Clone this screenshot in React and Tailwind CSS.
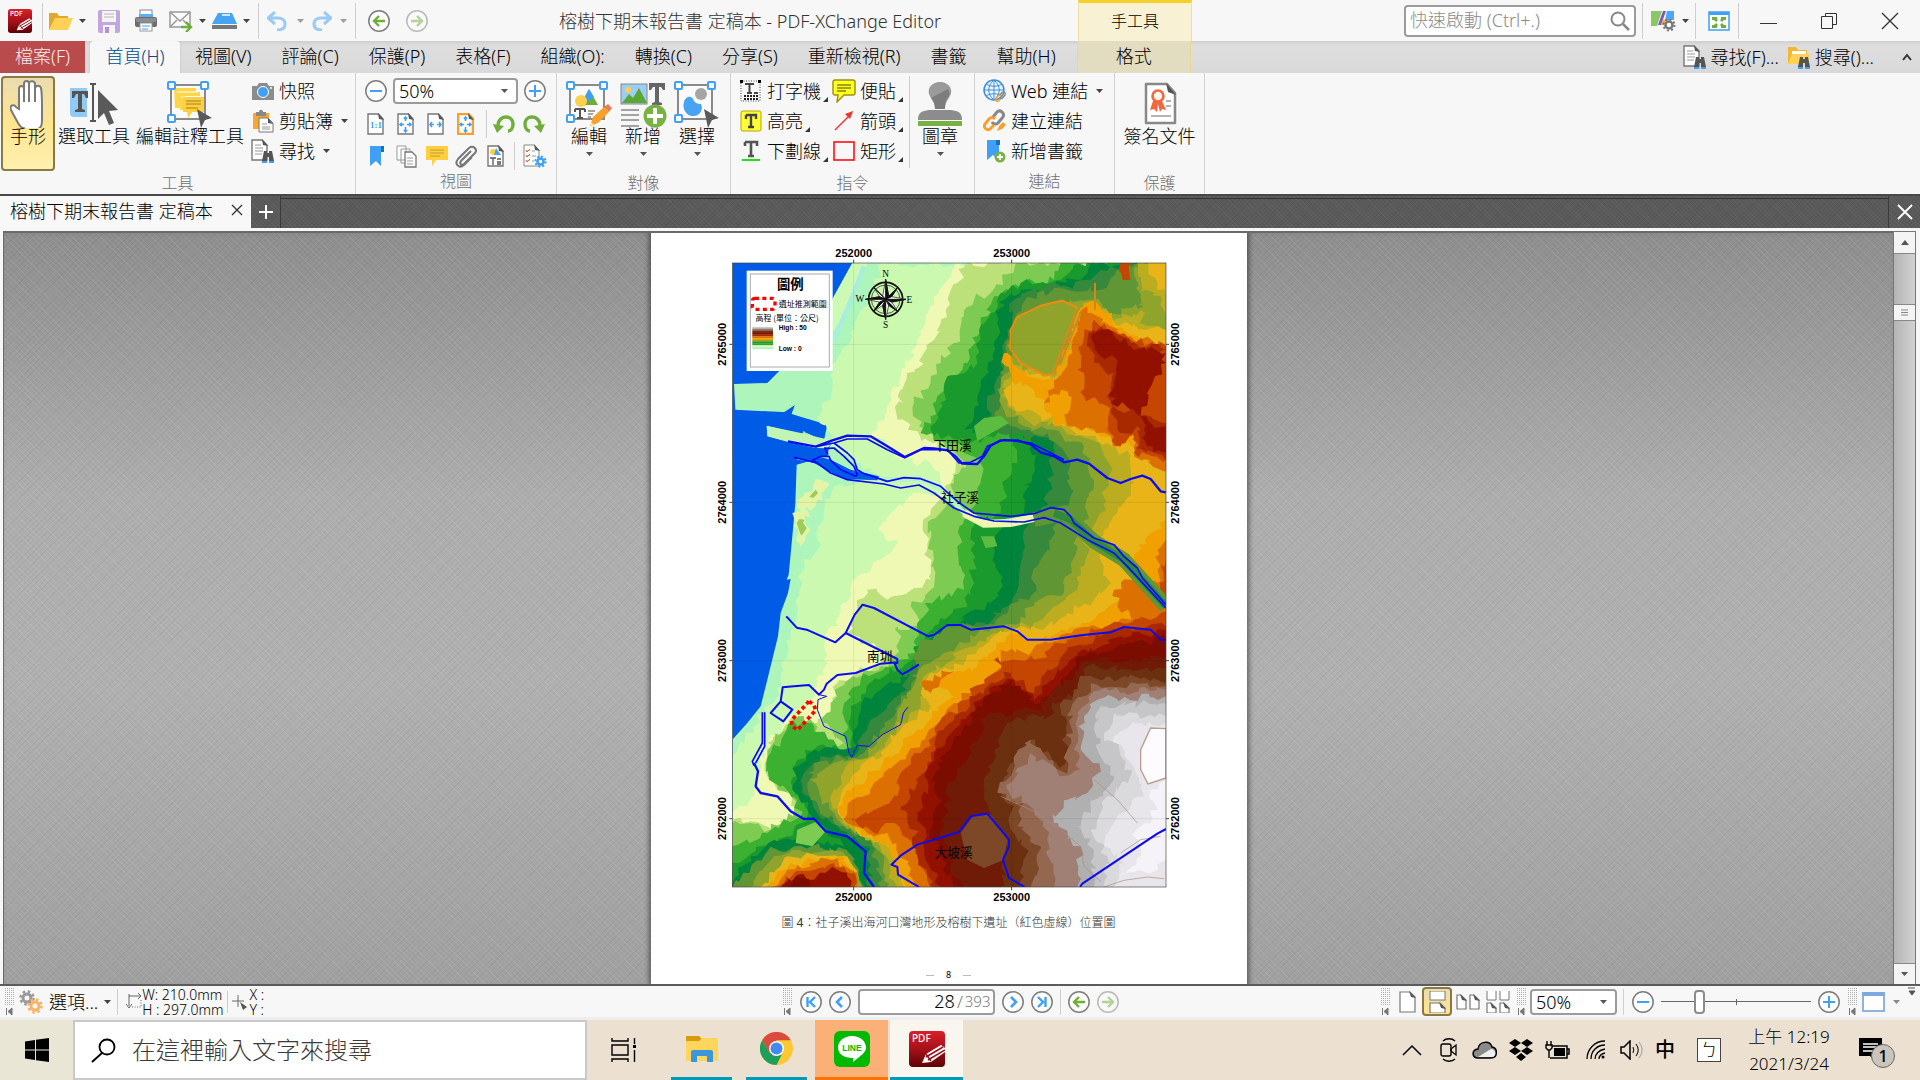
import React from "react";

const SANS = "font-['Noto_Sans','Noto_Sans_CJK_TC',sans-serif]";

/* ---------- shared pieces ---------- */

function Svg({ w, h, box, children, className = "" }) {
  return (
    <svg width={w} height={h} viewBox={box || `0 0 ${w} ${h}`} fill="none" className={`shrink-0 ${className}`} aria-hidden="true">
      {children}
    </svg>
  );
}

function Caret({ className = "text-[#444]" }) {
  return (
    <Svg w={7} h={4} className={className}>
      <path d="M0 0h7L3.5 4z" fill="currentColor" />
    </Svg>
  );
}

function Corner() {
  return (
    <Svg w={5} h={5} className="mb-1 -ml-0.5 self-end">
      <path d="M5 0v5H0z" fill="#333" />
    </Svg>
  );
}

function Rule({ className = "" }) {
  return <span className={`w-px shrink-0 bg-[#cfcfcf] ${className}`} />;
}

function Grip() {
  return (
    <Svg w={11} h={28}>
      {[0, 1, 2, 3, 4].map((c) =>
        [0, 1, 2, 3, 4, 5, 6, 7, 8].map((r) => <rect key={`${c}-${r}`} x={c * 2 + 1} y={r * 2} width="1" height="1" fill="#b0b0b0" />)
      )}
      <path d="M2.500 20v7M8 20v7L4 23.500z" stroke="#777" fill="#777" strokeWidth="1" />
    </Svg>
  );
}

function Circle({ label, children, faded }) {
  return (
    <button aria-label={label} className={faded ? "opacity-50" : ""}>
      <Svg w={22} h={22}>
        <circle cx="11" cy="11" r="10.200" fill="#fcfcfc" stroke="#7d7d7d" strokeWidth="1.500" />
        {children}
      </Svg>
    </button>
  );
}

const Minus = () => <path d="M5 11h12" stroke="#3fa0f5" strokeWidth="2" />;
const Plus = () => <path d="M5 11h12M11 5v12" stroke="#3fa0f5" strokeWidth="2" />;
const ArrowL = () => <path d="M17 11H6M11 6l-5 5 5 5" stroke="#6fae3a" strokeWidth="2.400" />;
const ArrowR = () => <path d="M5 11h11M11 6l5 5-5 5" stroke="#6fae3a" strokeWidth="2.400" />;

function ZoomSelect({ id, className }) {
  return (
    <span className={`relative flex items-center rounded-sm border-2 border-[#9b9b9b] bg-white ${className}`}>
      <select id={id} aria-label="縮放比例" defaultValue="50%" className="h-full w-full appearance-none bg-transparent pl-1 text-[18px] leading-5 text-black outline-none">
        <option>50%</option>
      </select>
      <span className="pointer-events-none absolute right-2">
        <Caret className="text-[#555]" />
      </span>
    </span>
  );
}

/* ---------- icons ---------- */

function PdfLogo({ size }) {
  return (
    <Svg w={size} h={size} box="0 0 36 36">
      <defs>
        <linearGradient id="pdfred" x1="0" y1="0" x2="0" y2="1">
          <stop offset="0" stopColor="#d8202c" />
          <stop offset="0.550" stopColor="#a01018" />
          <stop offset="1" stopColor="#5c0206" />
        </linearGradient>
      </defs>
      <rect width="36" height="36" rx="4" fill="url(#pdfred)" />
      <text x="3" y="11" fontSize="10" fontFamily="Noto Sans" fontWeight="500" fill="#fff">PDF</text>
      <path d="M13 32l4-9 15-9 4 3v4L22 31z" fill="#fff" />
      <path d="M17 26l17-10M19 29l17-10M17 23l5 7" stroke="#93111a" strokeWidth="1.500" />
    </Svg>
  );
}

function Page({ w = 17, h = 22, children, stroke = "#777", sw = 1.4, fill = "#fff" }) {
  return (
    <Svg w={w} h={h} box="0 0 17 22">
      <path d="M1 1h10.500L16 6v15H1z" fill={fill} stroke={stroke} strokeWidth={sw} />
      <path d="M11 0l6 7-5-1z" fill="#555" />
      {children}
    </Svg>
  );
}

const Binoculars = ({ x, y }) => (
  <g transform={`translate(${x} ${y})`}>
    <path d="M2 0h3v2h2V0h3l2 10H7V6H5v4H0z" fill="#555" />
    <path d="M0 10h5v2H0zM7 10h5v2H7z" fill="#3fa0f5" />
  </g>
);

const FindDoc = () => (
  <Svg w={24} h={24}>
    <path d="M1 1h10l5 5v15H1z" fill="#fff" stroke="#777" strokeWidth="1.400" />
    <path d="M11 0l6 7-5-1z" fill="#555" />
    <path d="M4 6h6M4 9h8M4 12h8M4 15h7" stroke="#999" />
    <Binoculars x={11} y={12} />
  </Svg>
);

const Chain = ({ x = 0, y = 0, s = 1 }) => (
  <g transform={`translate(${x} ${y}) scale(${s})`} strokeWidth="3" fill="none">
    <path d="M10 8l4-5c3-3 8 1 6 5l-5 6c-2 2-5 1-6-1" stroke="#888" />
    <path d="M12 10c-2-2-4-2-6 0l-4 5c-2 4 2 7 5 5l4-4" stroke="#f9a02c" />
  </g>
);

function Frame({ children, arrow }) {
  return (
    <Svg w={48} h={48}>
      <rect x="5" y="5" width="34" height="34" stroke="#8a8a8a" strokeWidth="2" fill="#fafafa" />
      {children}
      {[[2, 2], [35, 2], [2, 35]].map(([x, y]) => (
        <rect key={`${x}${y}`} x={x} y={y} width="7" height="7" rx="1" fill="#fff" stroke="#3fa0f5" strokeWidth="2" />
      ))}
      {arrow && <path d="M31 29l15 9-7 2-4 8z" fill="#5a5a5a" />}
    </Svg>
  );
}

const HandIcon = () => (
  <Svg w={36} h={48}>
    <path
      d="M9 29V9c0-4 5-4 5 0V4c0-4 5-4 5 0v-1c1-3 6-2 6 1v4c1-3 5-3 6 0 1 5 1 11 1 19v14c0 7-3 9-10 9-8 0-11-2-14-7L1 30c-2-5 3-6 5-3z"
      fill="#fff" stroke="#7a7a7a" strokeWidth="2"
    />
    <path d="M14 9v13M19 4v18M25 6v16" stroke="#7a7a7a" strokeWidth="2" />
  </Svg>
);

const SelectIcon = () => (
  <Svg w={48} h={48}>
    <path d="M0 8h17v29H4a4 4 0 0 1-4-4z" fill="#90caf9" />
    <path d="M2 11h16v7h-2l-2-4h-2v15l3 1v2H5v-2l3-1V14H6l-2 4H2z" fill="#555" />
    <path d="M20 4h6M23 4v37M20 41h6" stroke="#555" strokeWidth="2" />
    <path d="M28 10l20 20-9 1 5 12-5 2-5-12-6 6z" fill="#5a5a5a" />
  </Svg>
);

/* ---------- title bar ---------- */

function TitleBar() {
  return (
    <header className="flex h-[41px] shrink-0 items-center bg-[#f7f7f7] pl-2">
      <div className="flex w-[551px] shrink-0 items-center">
        <PdfLogo size={24} />
        <Rule className="ml-2.5 h-9" />
        <button aria-label="開啟" className="ml-1.5 flex items-center gap-1.5">
          <Svg w={24} h={20}>
            <path d="M0 19V2h8l2 3h9v4H6z" fill="#e0a92c" />
            <path d="M6 7h18l-5 12H0z" fill="#ffd257" />
          </Svg>
          <Caret />
        </button>
        <button aria-label="儲存" className="ml-3">
          <Svg w={22} h={24}>
            <rect width="22" height="23" y="1" rx="2" fill="#c3a5e0" />
            <rect x="4" y="2" width="14" height="11" fill="#f4f4f4" />
            <path d="M6 5h10M6 8h10" stroke="#ccc" strokeWidth="1.500" />
            <rect x="5" y="16" width="12" height="8" fill="#f4f4f4" />
            <rect x="7" y="18" width="4" height="6" fill="#b391d6" />
          </Svg>
        </button>
        <button aria-label="列印" className="ml-[15px]">
          <Svg w={22} h={23}>
            <rect x="5" y="1" width="12" height="9" fill="#fff" stroke="#888" />
            <rect x="4" y="5" width="14" height="5" fill="#5cb0f7" />
            <rect y="8" width="22" height="10" rx="2" fill="#6c6c6c" />
            <path d="M1 9h20v4H1z" fill="#8c8c8c" />
            <rect x="5" y="14" width="12" height="8" fill="#fff" stroke="#999" />
            <path d="M7 17h8M7 20h6" stroke="#3fa0f5" />
          </Svg>
        </button>
        <button aria-label="電子郵件" className="ml-3 flex items-center gap-1.5">
          <Svg w={24} h={22}>
            <rect x="1" y="2" width="20" height="15" fill="#fafafa" stroke="#999" strokeWidth="1.500" />
            <path d="M1 2l10 9L21 2M1 17l7-7M21 17l-7-7" stroke="#999" strokeWidth="1.500" />
            <path d="M12 17h9M17 12l5 5-5 5" stroke="#6fae3a" strokeWidth="2.400" />
          </Svg>
          <Caret />
        </button>
        <button aria-label="掃描" className="ml-1.5 flex items-center gap-1.5">
          <Svg w={25} h={18}>
            <path d="M6 1h14l5 11H0z" fill="#46a4f3" />
            <path d="M10 3h8" stroke="#fff" strokeWidth="1.500" />
            <rect y="13" width="25" height="4" fill="#777" />
          </Svg>
          <Caret />
        </button>
        <Rule className="ml-2 h-9" />
        <button aria-label="復原" className="ml-2 flex items-center gap-2.5 opacity-50">
          <Svg w={20} h={20}>
            <path d="M8 1L1 7l7 6M2 7h9c4 0 7 2 7 6s-3 6-8 6" stroke="#3fa0f5" strokeWidth="3" />
          </Svg>
          <Caret />
        </button>
        <button aria-label="重做" className="ml-2 flex items-center gap-2 opacity-50">
          <Svg w={20} h={20}>
            <path d="M12 1l7 6-7 6M18 7H9c-4 0-7 2-7 6s3 6 8 6" stroke="#3fa0f5" strokeWidth="3" />
          </Svg>
          <Caret />
        </button>
        <Rule className="ml-2 mr-3 h-9" />
        <Circle label="上一個視圖"><ArrowL /></Circle>
        <span className="w-4" />
        <Circle label="下一個視圖" faded><ArrowR /></Circle>
      </div>
      <h1 className="shrink-0 text-[18px] leading-6 text-[#333]">榕樹下期末報告書 定稿本 - PDF-XChange Editor</h1>
      <div className="flex flex-1 items-center justify-end">
        <div className="mr-[212px] h-[41px] w-[114px] border-x border-t-[3px] border-x-[#f3df9a] border-t-[#f5cf2a] bg-[#f8f1d4] pt-1.5 text-center text-base text-black">手工具</div>
        <label className="flex h-8 w-[232px] items-center rounded border-2 border-[#9b9b9b] bg-white px-1">
          <input aria-label="快速啟動" placeholder="快速啟動 (Ctrl+.)" className="min-w-0 flex-1 bg-transparent text-[18px] placeholder-[#8b8b8b] outline-none" />
          <Svg w={20} h={20}>
            <circle cx="8" cy="8" r="6.500" stroke="#888" strokeWidth="2" />
            <path d="M13 13l6 6" stroke="#888" strokeWidth="2.500" />
          </Svg>
        </label>
        <Rule className="ml-1.5 h-9" />
        <button aria-label="介面選項" className="ml-2 flex items-center gap-1.5">
          <Svg w={25} h={23}>
            <path d="M0 2h11L6 17H0z" fill="#8cc665" />
            <path d="M12 2h3l-5 14H7z" fill="#7d57b8" />
            <path d="M16 2h7v9h-9z" fill="#4ba9f5" />
            <path d="M12 11h4l-3 5h-3z" fill="#f7a93e" />
            <circle cx="18" cy="16" r="3.500" fill="#fff" stroke="#777" strokeWidth="2.500" />
            <circle cx="18" cy="16" r="5.500" stroke="#777" strokeWidth="2" strokeDasharray="2 2.300" />
          </Svg>
          <Caret />
        </button>
        <Rule className="ml-1.5 h-9" />
        <button aria-label="全螢幕" className="ml-3">
          <Svg w={22} h={20}>
            <rect x="1" y="1" width="20" height="18" fill="#fff" stroke="#3fa0f5" strokeWidth="1.500" />
            <path d="M1 1h20v3H1z" fill="#3fa0f5" />
            <path d="M4 6h5v2l1 1-2 2-2-2H4zM18 6h-5v2l-1 1 2 2 2-2h2zM4 17h5v-2l1-1-2-2-2 2H4zM18 17h-5v-2l-1-1 2-2 2 2h2z" fill="#6fae3a" />
          </Svg>
        </button>
        <Rule className="ml-2 h-9" />
        <button aria-label="最小化" className="ml-[21px]"><Svg w={17} h={18}><path d="M0 11.500h17" stroke="#333" /></Svg></button>
        <button aria-label="還原" className="ml-[43px]">
          <Svg w={18} h={18}><path d="M1.500 4.500h11v12h-11zM5.500 4V1.500h11v11H13" stroke="#333" /></Svg>
        </button>
        <button aria-label="關閉" className="ml-[43px] mr-[21px]"><Svg w={18} h={18}><path d="M1 1l16 16M17 1L1 17" stroke="#333" strokeWidth="1.300" /></Svg></button>
      </div>
    </header>
  );
}

/* ---------- ribbon tabs ---------- */

const MENU = ["視圖(V)", "評論(C)", "保護(P)", "表格(F)", "組織(O):", "轉換(C)", "分享(S)", "重新檢視(R)", "書籤", "幫助(H)"];

function RibbonTabs() {
  return (
    <nav className="flex h-8 shrink-0 items-stretch bg-gradient-to-b from-[#cfcfcf] via-[#dedede] via-15% to-[#d9d9d9] text-[18px] leading-[30px] text-black">
      <button className="w-[85px] bg-[#b94b4d] pb-0.5 text-[#fbe9e9]">檔案(F)</button>
      <button className="ml-[5px] w-[90px] rounded-t-sm bg-[#f7f7f7] pb-0.5 text-[#004a8c] shadow">首頁(H)</button>
      {MENU.map((m) => (
        <button key={m} className="px-[15px] pb-0.5">{m}</button>
      ))}
      <button className="ml-1.5 w-[114px] border-x border-[#ecd88c] bg-[#e2dcc0] pb-0.5">格式</button>
      <span className="flex-1" />
      <button className="flex items-center gap-1"><FindDoc />尋找(F)...</button>
      <button className="ml-2 flex items-center gap-1">
        <Svg w={24} h={24}>
          <path d="M1 2h8l2 3h9v14H1z" fill="#f0b92c" />
          <path d="M5 6h14v6H5z" fill="#fff" />
          <path d="M5 9h18l-3 10H1z" fill="#ffd257" />
          <Binoculars x={11} y={12} />
        </Svg>
        搜尋()...
      </button>
      <button aria-label="收合功能區" className="ml-7 mr-2 self-center"><Svg w={10} h={8}><path d="M1 7l4-5 4 5" stroke="#333" strokeWidth="2" /></Svg></button>
    </nav>
  );
}

/* ---------- ribbon ---------- */

function Group({ title, width, children }) {
  return (
    <section aria-label={title} className={`flex shrink-0 flex-col border-r border-[#d2d2d2] ${width}`}>
      <div className="flex flex-1 items-start pt-[3px]">{children}</div>
      <div className="h-[25px] text-center text-base leading-6 text-[#6f6f6f]">{title}</div>
    </section>
  );
}

function Big({ icon, label, caret, active, className = "" }) {
  return (
    <button className={`flex h-[95px] shrink-0 flex-col items-center rounded-sm pt-0.5 text-[18px] leading-6 text-black ${active ? "border-2 border-[#8a7940] bg-gradient-to-b from-[#eadcae] via-[#ffe58e] to-[#fff0b0]" : "border-2 border-transparent"} ${className}`}>
      {icon}
      <span className="-mt-1 whitespace-nowrap">{label}</span>
      {caret && <span className="mt-1"><Caret className="text-[#555]" /></span>}
    </button>
  );
}

function Small({ icon, label, caret, corner }) {
  return (
    <button className="flex h-[30px] items-center gap-1 whitespace-nowrap text-[18px] text-black">
      <span className="flex w-6 justify-center">{icon}</span>
      {label}
      {caret && <span className="ml-1"><Caret /></span>}
      {corner && <Corner />}
    </button>
  );
}

const Arrows = ({ d }) => <path d={d} stroke="#3fa0f5" strokeWidth="1.600" />;
const FOUR = "M8.500 4v4M8.500 14v5M3 11.500h4M10 11.500h4M7 6l1.500-2L10 6M7 17l1.500 2 1.500-2M5 10l-2 1.500L5 13M12 10l2 1.500-2 1.500";

function IconButton({ label, children, className = "" }) {
  return <button aria-label={label} className={`flex justify-center ${className}`}>{children}</button>;
}

function Ribbon() {
  return (
    <div className="flex h-[121px] shrink-0 bg-[#f7f7f7]">
      <Group title="工具" width="w-[356px]">
        <Big active icon={<HandIcon />} label="手形" className="ml-px w-[54px]" />
        <Big icon={<SelectIcon />} label="選取工具" className="w-[78px]" />
        <Big
          icon={
            <Frame arrow>
              <path d="M8 8h22v4H14v16H9zM12 12h22v4H19v14h-5z" fill="#ffd54a" />
              <path d="M11 12h21M15 17h21" stroke="#fff" strokeWidth="1" />
              <path d="M17 17h21v15H26l-4 6-1-6h-4z" fill="#ffcf40" />
              <path d="M20 21h15M20 24h15M20 28h12" stroke="#c39a2a" strokeWidth="1.500" />
            </Frame>
          }
          label="編輯註釋工具"
          className="w-[114px]"
        />
        <div className="ml-1">
          <Small
            label="快照"
            icon={
              <Svg w={22} h={17}>
                <path d="M0 3h5l2-3h8l2 3h5v14H0z" fill="#8c8c8c" />
                <circle cx="11" cy="9" r="5.500" fill="#3fa0f5" stroke="#fff" />
                <circle cx="19" cy="5" r="1" fill="#fff" />
              </Svg>
            }
          />
          <Small
            label="剪貼簿"
            caret
            icon={
              <Svg w={22} h={24}>
                <path d="M1 4h16v16H1z" fill="#faa634" />
                <path d="M4 3h3c0-3 4-3 4 0h3v4H4z" fill="#888" />
                <path d="M7 9h9l5 5v9H7z" fill="#fff" stroke="#777" />
                <path d="M16 9l5 6-5-1z" fill="#555" />
                <path d="M10 15h5M10 18h8M10 20h8" stroke="#999" />
              </Svg>
            }
          />
          <Small label="尋找" caret icon={<FindDoc />} />
        </div>
      </Group>

      <Group title="視圖" width="w-[201px]">
        <div className="flex w-full flex-col gap-2 pl-[9px] pt-0.5">
          <div className="flex h-[26px] items-center gap-1.5">
            <Circle label="縮小"><Minus /></Circle>
            <ZoomSelect id="zoom-top" className="h-[26px] w-[125px]" />
            <Circle label="放大"><Plus /></Circle>
          </div>
          <div className="flex h-6 items-center">
            <IconButton label="實際大小" className="ml-0.5 w-[17px]"><Page><text x="3" y="15" fontSize="9" fontFamily="Liberation Serif" fontWeight="700" fill="#3fa0f5">1:1</text></Page></IconButton>
            <IconButton label="符合頁面" className="ml-[13px] w-[17px]"><Page><Arrows d={FOUR} /></Page></IconButton>
            <IconButton label="符合寬度" className="ml-[13px] w-[17px]"><Page><Arrows d="M3 11.500h4M10 11.500h4M5 9l-2 2.500L5 14M12 9l2 2.500-2 2.500" /></Page></IconButton>
            <IconButton label="符合可見" className="ml-[13px] w-[17px]"><Page stroke="#f9a02c" sw={2.6}><Arrows d={FOUR} /></Page></IconButton>
            <Rule className="ml-3 h-7" />
            <IconButton label="逆時針旋轉" className="ml-1.5"><Svg w={22} h={20}><path d="M5 12C5 5 10 3 13 3c5 0 7 4 7 7 0 4-2 7-5 7" stroke="#6fae3a" strokeWidth="3.400" /><path d="M0 10l11 2-7 7z" fill="#6fae3a" /></Svg></IconButton>
            <IconButton label="順時針旋轉" className="ml-2"><Svg w={22} h={20}><path d="M17 12c0-7-5-9-8-9-5 0-7 4-7 7 0 4 2 7 5 7" stroke="#6fae3a" strokeWidth="3.400" /><path d="M22 10l-11 2 7 7z" fill="#6fae3a" /></Svg></IconButton>
          </div>
          <div className="flex h-6 items-center">
            <IconButton label="書籤" className="ml-0.5 w-[17px]"><Svg w={16} h={22}><path d="M2 1h11v20l-5-5-6 5z" fill="#3fa0f5" /><path d="M13 1h3v6h-3z" fill="#1d6fb8" /></Svg></IconButton>
            <IconButton label="縮圖" className="ml-3"><Svg w={22} h={23}><path d="M1 1h9v14H1zM5 4h9v14H5z" fill="#fff" stroke="#999" /><path d="M9 7h7l4 4v11H9z" fill="#fff" stroke="#777" strokeWidth="1.300" /><path d="M11 13h6M11 16h6M11 19h6" stroke="#999" /></Svg></IconButton>
            <IconButton label="註釋" className="ml-2"><Svg w={22} h={22}><path d="M0 1h22v14H10l-4 6v-6H0z" fill="#ffcf40" /><path d="M4 5h14M4 8h14M4 11h10" stroke="#c39a2a" /></Svg></IconButton>
            <IconButton label="附件" className="ml-[7px]"><Svg w={22} h={23}><path d="M16 6L6 16c-2 3 1 5 3 3L20 8c3-4-2-8-6-5L3 14c-4 5 1 10 6 6l8-8" stroke="#777" strokeWidth="2" /></Svg></IconButton>
            <IconButton label="內容" className="ml-2.5 w-[17px]"><Page><circle cx="6" cy="7" r="3" fill="#ffcf40" /><path d="M9 3l5 7H7z" fill="#46a4f3" /><path d="M3 13h6M6 13v7M10 14h4M10 17h4M10 19h4" stroke="#555" strokeWidth="1.300" /></Page></IconButton>
            <Rule className="ml-2.5 h-7" />
            <IconButton label="頁面設定" className="ml-2"><Svg w={24} h={24}><path d="M1 1h10l5 5v16H1z" fill="#fff" stroke="#888" /><path d="M11 0l6 7-5-1z" fill="#555" /><path d="M3 6l1 2 3-3M3 11l1 2 3-3M3 16l1 2 3-3" stroke="#e8502c" /><path d="M9 7h3M9 12h4M9 17h2" stroke="#999" /><circle cx="17.500" cy="17.500" r="3" stroke="#3fa0f5" strokeWidth="2.500" fill="#fff" /><circle cx="17.500" cy="17.500" r="5" stroke="#3fa0f5" strokeWidth="2.200" strokeDasharray="2 1.900" /></Svg></IconButton>
          </div>
        </div>
      </Group>

      <Group title="對像" width="w-[174px]">
        <Big
          caret label="編輯" className="ml-[5px] w-[54px]"
          icon={
            <Frame>
              <path d="M24 9l9 16H15z" fill="#6fae3a" /><path d="M24 9l5 8-8 6-2-4z" fill="#3fa0f5" />
              <circle cx="16" cy="21" r="6" fill="#ffd04a" />
              <path d="M10 29h10M15 29v9M12 38h6M10 29v3M20 29v3" stroke="#555" strokeWidth="2" />
              <path d="M23 31h7M23 34h5M23 37h3" stroke="#888" strokeWidth="1.400" />
              <path d="M25 46l3-9 11-10 5 5-11 11z" fill="#f9a02c" /><path d="M39 27l4-3 4 4-3 4z" fill="#f07a56" /><path d="M25 47l1-5 4 4z" fill="#ffe0b0" />
            </Frame>
          }
        />
        <Big
          caret label="新增" className="w-[54px]"
          icon={
            <Svg w={48} h={48}>
              <rect x="2" y="4" width="26" height="20" fill="#9ccdf7" stroke="#888" />
              <circle cx="9" cy="10" r="3" fill="#ffd04a" /><path d="M3 23l7-9 4 4 6-10 8 15z" fill="#5aa832" />
              <path d="M30 3h16v7h-2l-2-3h-2v15l3 1v2H33v-2l3-1V7h-2l-2 3h-2z" fill="#666" />
              <path d="M2 30h18M2 35h18M2 40h18M2 46h18" stroke="#888" strokeWidth="1.500" />
              <circle cx="36" cy="36" r="11.500" fill="#78b243" /><path d="M28 36h16M36 28v16" stroke="#fff" strokeWidth="4" />
            </Svg>
          }
        />
        <Big
          caret label="選擇" className="w-[54px]"
          icon={<Frame arrow><circle cx="28" cy="14" r="6" fill="#a5a5a5" /><path d="M11 22c2-7 8-6 9-3s4 5 8 5c3 6-2 13-9 12-6-1-10-7-8-14z" fill="#46a4f3" /></Frame>}
        />
      </Group>

      <Group title="指令" width="w-[244px]">
        <div className="ml-2">
          <Small label="打字機" corner icon={<Svg w={22} h={24}><rect x="1" y="2" width="19" height="20" stroke="#444" strokeDasharray="1 1.500" /><path d="M5 5h9M9.500 5v9M7 14h5M14 14h4" stroke="#444" strokeWidth="2" /><path d="M4 17h14M4 20h14" stroke="#222" strokeWidth="2" strokeDasharray="2 1" /><path d="M0 1h3v3H0zM18 1h3v3h-3z" fill="#000" /></Svg>} />
          <Small label="高亮" corner icon={<Svg w={22} h={22}><rect x="1" y="1" width="20" height="20" rx="2" fill="#ff3" stroke="#b5a800" /><path d="M6 5h10v4M6 5v4M11 5v12M8 17h6" stroke="#444" strokeWidth="2.400" /></Svg>} />
          <Small label="下劃線" corner icon={<Svg w={22} h={22}><path d="M5 2h12v4M5 2v4M11 2v14M8 16h6" stroke="#555" strokeWidth="2.600" /><path d="M2 20h18" stroke="#1be01b" strokeWidth="2" /></Svg>} />
        </div>
        <div className="ml-1">
          <Small label="便貼" corner icon={<Svg w={24} h={24}><path d="M3 1h18a2 2 0 0 1 2 2v11a2 2 0 0 1-2 2h-9l-7 7 1-7H3a2 2 0 0 1-2-2V3a2 2 0 0 1 2-2z" fill="#ff2" stroke="#99900c" strokeWidth="1.400" /><path d="M5 6h14M5 9h14M5 12h9" stroke="#8a8310" strokeWidth="1.400" /></Svg>} />
          <Small label="箭頭" corner icon={<Svg w={22} h={22}><path d="M2 20L19 3" stroke="#e33" strokeWidth="1.500" /><path d="M20 1l-3 8-5-5z" fill="#e33" /></Svg>} />
          <Small label="矩形" corner icon={<Svg w={22} h={20}><rect x="1" y="1" width="20" height="18" stroke="#f11" strokeWidth="1.600" /></Svg>} />
        </div>
        <Rule className="ml-1.5 h-[92px]" />
        <Big caret label="圖章" className="ml-0.5 w-14" icon={<Svg w={44} h={48}><path d="M17 29c0-4-1-7-4-11C7 9 14 2 22 2s15 7 9 16c-3 4-4 7-4 11z" fill="#9a9a9a" /><path d="M17 29c0-4-1-7-4-11l17-9c2 3 2 7-1 9-2 4-2 7-2 11z" fill="#7d7d7d" /><path d="M0 40c0-7 3-9 11-10h22c8 1 11 3 11 10z" fill="#8c8c8c" /><path d="M0 41h44v5H0z" fill="#78b243" /></Svg>} />
      </Group>

      <Group title="連結" width="w-[140px]">
        <div className="ml-2">
          <Small label="Web 連結" caret icon={<Svg w={24} h={24}><circle cx="11" cy="11" r="10" fill="#eaf5ff" stroke="#3f8fd5" strokeWidth="1.500" /><path d="M1 11h20M11 1v20M3 5c5 3 11 3 16 0M3 17c5-3 11-3 16 0M11 1c-7 6-7 14 0 20 7-6 7-14 0-20" stroke="#3f8fd5" /><Chain x={12} y={12} s={0.5} /></Svg>} />
          <Small label="建立連結" icon={<Svg w={24} h={24}><Chain /><path d="M14 22l2-5 4-4 3 3-4 4z" fill="#f9a02c" /></Svg>} />
          <Small label="新增書籤" icon={<Svg w={22} h={24}><path d="M3 1h12v20l-6-5-6 5z" fill="#3fa0f5" /><path d="M12 1h4v5h-4z" fill="#1d6fb8" /><circle cx="16" cy="18" r="5.500" fill="#78b243" /><path d="M13 18h6M16 15v6" stroke="#fff" strokeWidth="2" /></Svg>} />
        </div>
      </Group>

      <Group title="保護" width="w-[90px]">
        <Big label="簽名文件" className="w-[89px]" icon={<Svg w={34} h={48}><path d="M3 4h21l8 9v30H3z" fill="#fff" stroke="#888" strokeWidth="2.500" strokeLinejoin="round" /><path d="M23 3l10 12-8-3z" fill="#555" /><circle cx="15" cy="16" r="5.500" fill="#fff3ee" stroke="#f0683c" strokeWidth="2.600" /><path d="M10 21l-3 9 4-1 3 3 1-8 2 8 2-3 4 1-4-9z" fill="#f0683c" /><path d="M23 21h5M23 26h5M8 36h20" stroke="#999" strokeWidth="1.600" /></Svg>} />
      </Group>
    </div>
  );
}

/* ---------- terrain map ---------- */

/* Breaks each contour segment into small steps so the raster-like edges of the terrain show. */
function contour(line, seed) {
  const pts = line.split(" ").map((p) => p.split(",").map(Number));
  let s = seed * 7919 + 17;
  const rnd = () => {
    s = (s * 16807) % 2147483647;
    return s / 2147483647 - 0.5;
  };
  let d = `M${pts[0][0]} ${pts[0][1]}`;
  for (let i = 0; i < pts.length; i++) {
    const [x0, y0] = pts[i];
    const [x1, y1] = pts[(i + 1) % pts.length];
    const edge = (x0 > 1390 && x1 > 1390) || (y0 > 1965 && y1 > 1965) || (x0 < 97 && x1 < 97);
    const n = edge ? 1 : Math.max(1, Math.round(Math.hypot(x1 - x0, y1 - y0) / 16));
    for (let k = 1; k <= n; k++) {
      const j = k === n ? 0 : 26;
      d += `L${Math.round(x0 + ((x1 - x0) * k) / n + rnd() * j)} ${Math.round(y0 + ((y1 - y0) * k) / n + rnd() * j)}`;
    }
  }
  return d + "Z";
}

const E = " 1396,1972 1396,100";
const TERRAIN = [
  ["#cbf9b0", "545,100 520,180 460,300 400,400 395,480 350,560 400,620 390,650 480,700 540,740 400,770 370,850 350,960 330,990 300,1020 290,1130 285,1180 250,1290 240,1350 220,1420 160,1490 110,1560 95,1580 95,1972" + E],
  ["#f0f9b4", "770,100 700,200 650,330 600,440 560,540 510,610 560,650 600,690 690,700 740,780 700,800 640,790 570,850 530,900 590,940 540,990 460,1050 420,1150 370,1220 380,1300 350,1370 345,1400 270,1460 240,1500 190,1560 180,1600 160,1680 140,1730 95,1760 95,1972" + E],
  ["#bce07a", "800,100 770,160 735,240 700,330 640,420 600,480 590,570 650,605 695,640 780,690 750,760 690,840 665,900 680,960 690,1050 640,1075 560,1110 500,1080 470,1140 440,1210 490,1240 560,1270 540,1300 470,1330 410,1360 390,1440 350,1480 280,1455 200,1540 200,1640 260,1690 290,1730 280,1760 220,1790 150,1775 95,1770 95,1972" + E],
  ["#7ecb54", "960,100 870,190 820,210 790,260 760,340 720,400 690,460 640,520 655,590 720,630 800,700 760,760 740,820 690,870 690,960 700,990 690,1080 630,1130 650,1190 590,1190 590,1270 540,1310 430,1360 390,1420 370,1480 430,1540 400,1545 330,1470 290,1460 200,1560 205,1640 270,1700 280,1740 210,1800 150,1780 95,1780 95,1972" + E],
  ["#3cb030", "1080,100 1060,150 980,160 930,170 880,200 860,260 830,320 800,400 760,460 710,500 690,560 660,610 750,640 850,690 840,760 820,830 790,870 770,950 780,1010 790,1080 690,1120 650,1180 640,1270 590,1300 480,1350 430,1420 440,1500 430,1560 340,1490 280,1475 210,1570 205,1650 290,1710 300,1760 200,1810 95,1850 95,1972" + E],
  ["#1a9a2c", "1130,100 1080,150 960,160 900,190 870,250 840,330 830,400 740,440 720,520 690,590 700,620 840,640 870,620 930,600 950,700 910,780 900,850 820,890 810,960 820,1060 800,1130 700,1190 640,1250 650,1290 520,1350 450,1430 450,1500 450,1560 350,1550 290,1590 270,1660 310,1720 320,1760 260,1820 95,1900 95,1972" + E],
  ["#00843c", "1180,100 1140,150 1040,165 960,180 910,210 890,280 880,350 860,420 830,500 820,560 790,600 840,620 900,590 990,620 1000,700 970,790 970,850 900,900 880,980 900,1050 880,1110 800,1150 770,1190 700,1220 640,1300 600,1340 540,1380 480,1430 460,1500 470,1550 420,1560 340,1560 290,1610 275,1680 320,1740 380,1800 430,1850 300,1830 220,1830 150,1880 95,1960 95,1972" + E],
  ["#36893c", "1230,110 1160,150 1100,170 1000,175 940,210 920,300 900,400 880,470 860,540 880,600 970,620 1060,640 1050,760 1020,850 970,900 960,1000 950,1080 900,1150 850,1180 760,1200 690,1240 640,1300 600,1390 560,1430 500,1500 460,1580 360,1580 310,1630 305,1690 350,1750 440,1810 500,1850 510,1972" + E],
  ["#609634", "1250,120 1200,180 1100,180 1010,190 950,250 925,330 910,420 900,500 880,560 960,600 1040,610 1100,680 1110,800 1070,880 1050,930 1010,1010 990,1100 900,1160 850,1190 780,1185 720,1215 650,1260 650,1310 630,1380 600,1420 540,1500 490,1570 400,1590 340,1600 320,1660 330,1710 400,1780 500,1830 530,1890 540,1972" + E],
  ["#90a42c", "1290,110 1330,230 1220,250 1170,210 1060,215 970,250 930,330 930,420 900,470 910,540 970,590 1060,600 1150,650 1180,750 1160,850 1130,920 1110,1000 1090,1090 1000,1120 960,1180 840,1200 790,1240 700,1290 650,1330 640,1400 600,1450 530,1540 480,1590 400,1600 330,1650 360,1700 420,1780 510,1830 550,1900 560,1972" + E],
  ["#bcac20", "1310,100 1350,240 1240,270 1190,240 1150,215 1130,250 1060,440 930,400 905,470 920,530 990,580 1080,590 1200,650 1230,730 1200,850 1160,930 1150,1010 1130,1080 1060,1130 1000,1180 880,1210 830,1240 740,1300 670,1340 650,1420 600,1470 540,1560 480,1590 420,1640 390,1700 440,1790 520,1830 570,1920 590,1972" + E],
  ["#e8b418", "1340,100 1380,280 1250,290 1180,240 1150,230 1110,350 1070,440 940,420 910,480 940,530 1020,560 1090,590 1220,640 1290,680 1300,760 1250,850 1210,900 1200,990 1230,1060 1180,1110 1100,1150 1020,1200 900,1200 830,1260 760,1320 690,1330 660,1390 690,1430 600,1500 560,1550 480,1610 420,1700 410,1740 470,1810 540,1830 590,1900 610,1972" + E],
  ["#bcac20", "1310,100 1396,100 1396,300 1290,280 1330,220"],
  ["#90a42c", "1335,180 1380,200 1396,260 1396,300 1330,285 1320,240"],
  ["#e8b418", "1340,100 1396,100 1396,200 1370,160"],
  ["#f0a000", "1396,345 1290,315 1210,250 1170,215 1150,230 1120,300 1090,400 1060,450 960,420 910,370 930,450 1000,480 1030,520 1060,590 1120,590 1200,620 1290,650 1340,690 1396,720"],
  ["#f0a000", "1396,870 1350,910 1300,990 1320,1080 1240,1120 1180,1170 1000,1230 930,1210 830,1310 720,1340 700,1370 760,1400 650,1500 600,1560 500,1640 430,1700 420,1760 500,1820 540,1830 600,1940 630,1972 1396,1972"],
  ["#dc7000", "1396,345 1290,320 1230,290 1160,230 1130,300 1100,400 1030,520 1110,470 1100,590 1180,600 1260,650 1300,610 1300,680 1396,720"],
  ["#dc7000", "1396,930 1370,960 1370,1060 1290,1050 1240,1080 1250,1130 1290,1170 1100,1210 990,1270 900,1260 920,1310 880,1330 840,1370 760,1420 680,1510 600,1590 520,1660 440,1740 440,1780 500,1810 560,1810 620,1900 650,1972 1396,1972"],
  ["#dc7000", "660,1360 700,1335 760,1325 720,1350 690,1390"],
  ["#c44600", "1396,350 1290,330 1220,300 1180,270 1150,320 1130,420 1150,430 1150,500 1220,530 1220,600 1260,650 1310,590 1300,670 1396,690"],
  ["#c44600", "1396,990 1375,1060 1396,1100 1380,1150 1290,1180 1180,1200 1100,1230 1000,1290 940,1290 880,1290 900,1320 850,1350 800,1410 720,1470 660,1570 600,1630 590,1700 520,1740 450,1770 520,1810 580,1780 640,1850 690,1972 1396,1972"],
  ["#a82800", "1396,360 1290,340 1200,290 1160,330 1180,400 1240,430 1220,500 1250,540 1396,580 1396,690 1300,655 1320,600 1250,600 1230,540"],
  ["#a82800", "1396,1190 1260,1200 1200,1220 1120,1250 1040,1320 1000,1390 970,1350 930,1330 880,1360 820,1400 730,1500 690,1570 650,1660 600,1740 640,1800 650,1880 700,1972 1396,1972"],
  ["#921000", "1396,370 1290,350 1240,320 1200,300 1170,320 1200,380 1250,390 1240,460 1230,520 1290,540 1340,570 1396,600 1396,670 1340,650 1320,560"],
  ["#921000", "1396,1200 1290,1220 1200,1250 1130,1270 1050,1350 1000,1410 940,1350 900,1370 840,1410 760,1500 700,1580 680,1650 660,1740 670,1850 720,1972 1396,1972"],
  ["#7a0c00", "1396,1225 1150,1280 1080,1350 1020,1420 960,1380 930,1350 830,1430 770,1520 710,1600 700,1680 720,1720 690,1800 720,1880 760,1972 1396,1972"],
  ["#701a08", "1396,1280 1150,1290 1120,1340 1060,1380 1010,1440 960,1440 840,1470 840,1520 800,1590 740,1660 740,1750 720,1800 750,1900 790,1972 1396,1972"],
  ["#6a3010", "1396,1320 1160,1310 1130,1380 1060,1420 1070,1460 980,1460 920,1480 880,1560 850,1650 860,1720 870,1800 920,1850 900,1972 1396,1972"],
  ["#7c4828", "1396,1350 1160,1340 1120,1380 1080,1440 1100,1560 1080,1620 990,1530 930,1600 890,1680 940,1730 930,1800 980,1860 960,1972 1396,1972"],
  ["#946850", "1396,1370 1170,1360 1110,1440 1100,1560 1100,1630 1060,1610 990,1530 940,1600 890,1690 970,1720 950,1790 1020,1850 990,1972 1396,1972"],
  ["#a08074", "1396,1380 1180,1385 1130,1450 1120,1560 1140,1620 1080,1640 990,1570 920,1680 1000,1740 1040,1830 1060,1972 1396,1972"],
  ["#b0b0b0", "1396,1400 1190,1410 1150,1460 1140,1560 1200,1620 1160,1690 1100,1710 1060,1780 1140,1850 1130,1972 1396,1972"],
  ["#c6c6c8", "1396,1420 1200,1430 1180,1500 1210,1600 1240,1640 1200,1700 1130,1790 1180,1860 1180,1972 1396,1972"],
  ["#dadadd", "1396,1460 1240,1450 1210,1510 1260,1580 1290,1640 1220,1700 1170,1800 1220,1880 1210,1972 1396,1972"],
  ["#e8e6ea", "1396,1480 1300,1480 1240,1520 1290,1600 1330,1700 1250,1760 1210,1850 1270,1900 1240,1972 1396,1972"],
  ["#f6f3f8", "1396,1650 1350,1680 1370,1740 1300,1810 1320,1880 1250,1940 1340,1930 1396,1880"],
  ["#609634", "95,1972 200,1865 300,1848 440,1862 490,1972"],
  ["#90a42c", "150,1972 220,1880 300,1860 420,1865 485,1972"],
  ["#e8b418", "180,1972 260,1880 350,1878 440,1880 480,1972"],
  ["#f0a000", "200,1972 270,1900 350,1895 430,1885 475,1972"],
  ["#dc7000", "215,1972 260,1920 400,1890 450,1920 470,1972"],
  ["#c44600", "230,1972 280,1930 340,1920 400,1900 450,1930 460,1972"],
  ["#921000", "240,1972 290,1935 340,1950 400,1915 440,1940 450,1972"],
  ["#7a0c00", "250,1972 285,1940 330,1972"],
  ["#c44600", "1260,100 1300,100 1290,150 1255,125"],
  ["#90a42c", "600,1480 600,1430 650,1350 660,1410 620,1480"],
  ["#609634", "640,1290 655,1250 700,1220 790,1180 800,1210 730,1270 690,1300"],
  ["#e2f4a6", "290,830 340,760 385,760 345,830 310,850"],
  ["#9ccc5c", "322,800 345,780 352,790 338,805"],
  ["#e2f4a6", "275,850 320,840 330,900 300,950 285,930"],
  ["#9ccc5c", "288,880 312,870 318,895 300,915"],
];

const RIVERS = [
  [5, "M262 635L345 651 395 632 440 618 510 620 560 650 612 682 670 655 700 656 740 662 765 680 785 702 830 703 850 680 870 648 900 632 950 632 990 644 1020 668 1060 680 1090 698 1130 690 1165 702 1220 745 1260 760 1290 748 1325 738 1350 748 1380 785 1396 788"],
  [3, "M345 651L400 640 440 628 500 628 560 660 612 684 660 660 740 660 775 700 810 698 845 680 860 650 910 630 990 640 1050 670 1090 690"],
  [3, "M280 683L350 700 390 730 440 750 550 763 600 775 655 766 700 790 760 835 820 860 880 874 970 877 1030 864 1080 880 1160 930 1240 970 1280 1010 1396 1135M350 700L335 692 360 680 385 680 390 692 420 720 465 740 470 735 460 710 430 680 400 655 385 656 372 655 382 675M400 640L440 670 460 690 470 720 490 732 560 755 610 744 660 747 720 770 770 815 820 850 930 860 1000 852 1050 834 1090 840 1110 860 1120 880 1180 925 1240 945 1270 980 1310 1015 1325 1045 1396 1125"],
  [4, "M257 1160L288 1194 318 1200 404 1238 435 1210 462 1155 486 1125 520 1135 683 1220 700 1216 740 1186 780 1186 810 1200 910 1190 950 1205 980 1230 1050 1230 1140 1217 1230 1208 1270 1192 1350 1200 1380 1230 1396 1232M435 1210L590 1288 590 1300 582 1302 590 1320 605 1334 630 1320 655 1304M590 1298L540 1302 465 1330 410 1336 378 1362 370 1380 355 1395 325 1366 280 1370 246 1373 240 1415 275 1440 248 1475 210 1450 240 1415"],
  [1, "M355 1395L378 1400 352 1410 350 1440 370 1490 435 1520 445 1570 453 1583 470 1547 505 1550 545 1515 600 1485 608 1450 622 1432"],
  [5, "M160 1600L172 1625 165 1670 180 1690 230 1700 270 1745 310 1768 340 1767 375 1805 440 1820 495 1865 490 1930 520 1972"],
  [3, "M185 1448V1540L155 1595 160 1608M192 1448V1550L165 1600"],
  [4, "M655 1972L592 1935 590 1912 572 1905 600 1878 650 1845 775 1807 810 1760 860 1752 925 1830 925 1850 907 1890 925 1945 972 1972M1396 1798L1370 1812 1145 1962 1138 1972"],
];

const GRID = [["252000", 459], ["253000", 933]];
const GRID_V = [["2765000", 344], ["2764000", 818], ["2763000", 1293], ["2762000", 1767]];
const PLACES = [["下田溪", 756, 660], ["社子溪", 778, 817], ["南圳", 537, 1293], ["大坡溪", 759, 1882]];
const LEGEND = ["#b0b0b0", "#946850", "#6a3010", "#7a0c00", "#a82800", "#dc7000", "#f0a000", "#90a42c", "#1a9a2c", "#36a030", "#e8f6b0", "#a8f5c8"];

function TerrainMap() {
  return (
    <svg width="470" height="659" viewBox="40 49 1410 1977" className="block" role="img" aria-label="社子溪出海河口灣地形圖" fontFamily="Liberation Sans" fontWeight="700">
      <clipPath id="frame"><rect x="95" y="100" width="1301" height="1872" /></clipPath>
      <g clipPath="url(#frame)">
        <rect x="95" y="100" width="1301" height="1872" fill="#005ce6" />
        <path fill="#aef5bc" d="M455 100L400 200 330 340 235 425 200 460 100 463 104 540 258 548 282 527 272 553 380 585 370 630 395 640 380 660 345 655 200 620 197 588 350 625 300 600 290 690 325 695 288 705 284 820 275 920 264 1035 258 1050 270 1048 262 1090 240 1150 232 1220 200 1350 180 1430 140 1480 95 1530V1972H1396V100Z" />
        {TERRAIN.map(([color, line], i) => <path key={i} d={contour(line, i + 3)} fill={color} />)}
        <path d="M455 100L400 200 330 340 380 330 440 240 500 100Z" fill="#ccf9b4" />
        <path d="M490 110L460 190 400 330" stroke="#a8eedd" strokeWidth="14" fill="none" />
        <path d="M250 548L282 527 272 553 312 568 306 612 200 588 96 545ZM96 545L198 588 200 620 262 640 345 656 335 688 282 684 96 690Z" fill="#005ce6" />
        <path d="M320 568L375 588 370 627 312 608ZM345 655L385 655 380 680 335 682 282 664 262 635Z" fill="#005ce6" />
        <path d="M198 588L300 610 400 634 380 656 345 655 265 638 200 620Z" fill="#c0f5b4" />
        <path d="M285 686L350 680 390 690 450 720 535 740 530 752 430 748 380 722 340 700Z" fill="#005ce6" />
        <path d="M540 750L660 748 720 775 800 860 880 880 1000 862" stroke="#b4f4c8" strokeWidth="14" fill="none" />
        <path d="M790 850L850 882 930 880 1010 862" stroke="#eef6b0" strokeWidth="24" fill="none" />
        <path d="M1000 870L1090 850 1180 935 1270 990 1396 1130" stroke="#609634" strokeWidth="44" fill="none" />
        <path d="M1060 850L1110 870 1180 935 1270 990 1396 1130" stroke="#2e8a3c" strokeWidth="22" fill="none" />
        <path d="M930 300L950 262 1020 228 1085 213 1130 235 1057 435 1030 435 960 400 930 360Z" fill="#90a42c" stroke="#ee8a10" strokeWidth="6" />
        <path d="M1183 160V240M1130 240L1060 430M1140 250L1080 400M1105 290h30" stroke="#d88418" strokeWidth="6" fill="none" />
        <path d="M780 1810L820 1755 870 1755 920 1830 910 1890 850 1915 800 1890Z" fill="#7c4828" />
        <path d="M1396 1497L1350 1495 1320 1560 1320 1620 1342 1663 1396 1645Z" fill="#fdfbfe" stroke="#b79c92" strokeWidth="4" />
        <path d="M900 1700L1000 1745 1080 1800 1140 1850 1150 1910 1200 1955M1180 1650l70 60 60 70M1260 1870l60-40 60-10M1210 1972l60-20 70-10 50 5" stroke="#a98c80" strokeWidth="2" fill="none" />
        <path d="M820 590L850 565 900 558 925 580 830 635ZM840 920l40 0 10 30 -35 5Z" fill="#5cbc40" />
        <path d="M290 1800l60-25 25 30 -40 45 -50-10Z" fill="#7ecb54" />
        <g stroke="#000" strokeOpacity="0.120" strokeWidth="2">
          {GRID.map(([t, x]) => <path key={t} d={`M${x} 100V1972`} />)}
          {GRID_V.map(([t, y]) => <path key={t} d={`M95 ${y}H1396`} />)}
        </g>
        {RIVERS.map(([w, d]) => <path key={d} d={d} stroke="#0a0af5" strokeWidth={w + 2} fill="none" strokeLinejoin="round" />)}
        <path d="M325 1415L272 1472 274 1490 291 1501 345 1442 340 1426Z" fill="none" stroke="#f00" strokeWidth="11" strokeDasharray="11 9" />
      </g>
      <rect x="95" y="100" width="1301" height="1872" fill="none" stroke="#444" strokeWidth="2" />

      {GRID.map(([t, x]) => (
        <g key={t} fontSize="33" textAnchor="middle">
          <path d={`M${x} 90v10M${x} 1972v10`} stroke="#444" strokeWidth="3" />
          <text x={x} y="81">{t}</text>
          <text x={x} y="2013">{t}</text>
        </g>
      ))}
      {GRID_V.map(([t, y]) => (
        <g key={t} fontSize="33" textAnchor="middle">
          <path d={`M86 ${y}h9M1396 ${y}h9`} stroke="#444" strokeWidth="3" />
          <text transform={`translate(77 ${y}) rotate(-90)`}>{t}</text>
          <text transform={`translate(1436 ${y}) rotate(-90)`}>{t}</text>
        </g>
      ))}
      {PLACES.map(([t, x, y]) => (
        <text key={t} x={x} y={y} fontSize="38" fontWeight="400" textAnchor="middle" fontFamily="Noto Sans CJK TC">{t}</text>
      ))}

      <rect x="138" y="123" width="258" height="301" fill="#fff" />
      <rect x="149" y="133" width="237" height="279" fill="none" stroke="#aaa" strokeWidth="3" />
      <g fontFamily="Noto Sans CJK TC">
        <text x="269" y="177" fontSize="40" textAnchor="middle">圖例</text>
        <text x="306" y="231" fontSize="24" fontWeight="400" textAnchor="middle">遺址推測範圍</text>
        <text x="259" y="274" fontSize="24" fontWeight="400" textAnchor="middle">高程 (單位：公尺)</text>
      </g>
      <rect x="155" y="206" width="68" height="33" rx="8" fill="none" stroke="#f00" strokeWidth="10" strokeDasharray="12 10" />
      {LEGEND.map((c, i) => <rect key={c} x="155" y={293 + i * 5.4} width="62" height="6" fill={c} />)}
      <text x="234" y="300" fontSize="20">High : 50</text>
      <text x="234" y="365" fontSize="20">Low : 0</text>

      <g fontFamily="Liberation Serif" fontWeight="400" fontSize="28" textAnchor="middle">
        <circle cx="555" cy="209" r="51" fill="none" stroke="#111" strokeWidth="5" />
        <circle cx="555" cy="209" r="43" fill="none" stroke="#111" strokeWidth="2" />
        <path d="M555 149l9 51 27-27-18 28 43 8-43 8 18 28-27-18-9 43-9-43-27 18 18-28-43-8 43-8-18-28 27 27z" fill="#fff" stroke="#111" strokeWidth="2" />
        <path d="M555 149v60l9-9zM616 209h-61l18 8zM555 269v-60l-9 18zM495 209h60l-18-8zM519 173l36 36-9-9zM591 173l-36 36 18-8zM591 245l-36-36 9 18zM519 245l36-36-18 8z" fill="#111" stroke="#111" strokeWidth="3" />
        <text x="555" y="141">N</text>
        <text x="555" y="294">S</text>
        <text x="478" y="218">W</text>
        <text x="626" y="219">E</text>
      </g>
    </svg>
  );
}

/* ---------- document area ---------- */

const DARK = "bg-[repeating-linear-gradient(45deg,rgba(255,255,255,0.04)_0_1px,transparent_1px_3px),repeating-linear-gradient(-45deg,rgba(0,0,0,0.05)_0_1px,transparent_1px_3px)]";
const LIGHT = "bg-[repeating-linear-gradient(45deg,rgba(255,255,255,0.07)_0_1px,transparent_1px_4px),repeating-linear-gradient(-45deg,rgba(0,0,0,0.04)_0_1px,transparent_1px_4px),linear-gradient(#8e8e8e,#adadad_35%,#b0b0b0_60%,#a0a0a0)]";

function DocumentArea() {
  return (
    <>
      <div className={`flex h-[34px] shrink-0 border-t-2 border-[#484848] bg-[#5a5a5a] ${DARK}`}>
        <div className="flex w-[251px] items-center justify-between bg-[#f8f8f8] pl-2.5 pr-2">
          <span className="whitespace-nowrap pb-0.5 text-[18px] leading-6 text-black">榕樹下期末報告書 定稿本</span>
          <button aria-label="關閉分頁" className="mb-1"><Svg w={12} h={12}><path d="M1 1l10 10M11 1L1 11" stroke="#333" strokeWidth="1.300" /></Svg></button>
        </div>
        <button aria-label="新分頁" className="flex w-[30px] items-center justify-center border-r border-[#3a3a3a]"><Svg w={14} h={14}><path d="M0 7h14M7 0v14" stroke="#fff" strokeWidth="2" /></Svg></button>
        <span className="mt-[2px] flex-1 border-t border-[#333]" />
        <button aria-label="關閉文件" className="flex w-8 items-center justify-center border-l border-[#3a3a3a]"><Svg w={16} h={16}><path d="M1 1l14 14M15 1L1 15" stroke="#fff" strokeWidth="1.800" /></Svg></button>
      </div>
      <div className="h-[3px] shrink-0 bg-[#f7f7f7]" />
      <div className="flex min-h-0 flex-1 bg-[#f7f7f7] pl-[3px] pr-1">
        <main className={`flex flex-1 justify-center overflow-hidden border-l border-t-2 border-[#6a6a6a] shadow-inner ${LIGHT}`}>
          <article className="flex w-[596px] shrink-0 flex-col items-center bg-white pt-[13px] shadow-[0_0_5px_2px_rgba(0,0,0,0.45)]">
            <TerrainMap />
            <p className="mt-[10px] text-[12px] leading-4 text-[#333]">圖 <b>4</b>：社子溪出海河口灣地形及榕樹下遺址（紅色虛線）位置圖</p>
            <p className="mt-9 flex items-center gap-3 text-[9px] leading-4 text-black">
              <span className="h-px w-2 bg-[#bbb]" /><b>8</b><span className="h-px w-2 bg-[#bbb]" />
            </p>
          </article>
        </main>
        <div className="flex w-[23px] flex-col border-x border-t border-[#777] bg-gradient-to-r from-[#b4b4b4] to-[#d2d2d2]">
          <button aria-label="向上捲動" className="flex h-[22px] items-center justify-center border-b border-[#888] bg-[#f4f4f4]"><Svg w={8} h={5}><path d="M0 5h8L4 0z" fill="#555" /></Svg></button>
          <button aria-label="捲動" className="mt-[50px] flex h-[17px] items-center justify-center border-y border-[#888] bg-[#f4f4f4]"><Svg w={7} h={7}><path d="M0 1h7M0 3.500h7M0 6h7" stroke="#888" /></Svg></button>
          <span className="flex-1" />
          <button aria-label="向下捲動" className="flex h-[21px] items-center justify-center border-t border-[#888] bg-[#f4f4f4]"><Caret className="text-[#555]" /></button>
        </div>
      </div>
    </>
  );
}

/* ---------- status bar ---------- */

const Fold = ({ x, y, w, h }) => (
  <g>
    <path d={`M${x} ${y}h${w - 5}l5 5v${h - 5}h${-w}z`} fill="#fff" stroke="#777" strokeWidth="1.200" />
    <path d={`M${x + w - 6} ${y - 1}l7 7-5-1z`} fill="#555" />
  </g>
);

function StatusBar() {
  return (
    <div className="flex h-9 shrink-0 items-center border-b-[3px] border-t-2 border-b-[#eee] border-t-[#5c5c5c] bg-[#f7f7f7] text-black">
      <div className="flex flex-1 items-center pl-1">
        <Grip />
        <button className="ml-1 flex items-center gap-1.5 text-[18px] leading-6">
          <Svg w={24} h={24}>
            <circle cx="8" cy="8" r="4" stroke="#999" strokeWidth="3" /><circle cx="8" cy="8" r="6.500" stroke="#999" strokeWidth="2.500" strokeDasharray="2.500 2.600" />
            <circle cx="16" cy="16" r="4" stroke="#f9b266" strokeWidth="3" /><circle cx="16" cy="16" r="6.500" stroke="#f9b266" strokeWidth="2.500" strokeDasharray="2.500 2.600" />
          </Svg>
          選項...
          <Caret />
        </button>
        <Rule className="ml-1.5 h-[26px]" />
        <div className="ml-2 flex items-center text-[14px] leading-[15px]">
          <Svg w={16} h={18}><path d="M3 1v12M0 11l3 4 3-4M3 3h12M12 0l3 3-3 3" stroke="#666" /><path d="M6 14h9V6" stroke="#666" strokeDasharray="1 1.500" /></Svg>
          <div><div>W: 210.0mm</div><div>H : 297.0mm</div></div>
        </div>
        <Rule className="mx-1 h-[22px]" />
        <div className="flex items-center gap-0.5 text-[14px] leading-[15px]">
          <Svg w={15} h={16}><path d="M0 7h12M6 1v12" stroke="#666" /><path d="M8 8l7 5-4 3z" fill="#555" /></Svg>
          <div><div>X :</div><div>Y :</div></div>
        </div>
      </div>

      <div className="flex items-center gap-[7px]">
        <Grip />
        <Circle label="第一頁"><path d="M7.500 6v10M15 6l-5 5 5 5" stroke="#3fa0f5" strokeWidth="2.400" /></Circle>
        <Circle label="上一頁"><path d="M13 6l-5 5 5 5" stroke="#3fa0f5" strokeWidth="2.600" /></Circle>
        <label className="flex h-[26px] w-[137px] items-center rounded border-2 border-[#9b9b9b] bg-white pr-0.5 text-[15px] text-[#777]">
          <input aria-label="頁碼" defaultValue="28" className="min-w-0 flex-1 bg-transparent text-right text-[18px] text-black outline-none" />
          <span className="px-0.5 text-[17px]">/</span>393
        </label>
        <Circle label="下一頁"><path d="M9 6l5 5-5 5" stroke="#3fa0f5" strokeWidth="2.600" /></Circle>
        <Circle label="最後一頁"><path d="M14.500 6v10M7 6l5 5-5 5" stroke="#3fa0f5" strokeWidth="2.400" /></Circle>
        <Rule className="h-[26px]" />
        <Circle label="後退"><ArrowL /></Circle>
        <Circle label="前進" faded><ArrowR /></Circle>
      </div>

      <div className="ml-5 flex flex-1 items-center justify-end pr-1">
        <Grip />
        <button aria-label="單頁" className="ml-2"><Svg w={17} h={22}><Fold x={1} y={1} w={15} h={20} /></Svg></button>
        <button aria-label="連續" className="ml-1.5 flex h-[29px] w-[30px] items-center justify-center rounded-sm border-2 border-[#8a7940] bg-gradient-to-b from-[#eadcae] to-[#ffe58e]">
          <Svg w={17} h={22}><rect x="1" y="0" width="15" height="9" fill="#fff" stroke="#777" /><Fold x={1} y={12} w={15} h={10} /></Svg>
        </button>
        <button aria-label="雙頁" className="ml-1"><Svg w={24} h={18}><Fold x={1} y={2} w={9} h={14} /><Fold x={14} y={2} w={9} h={14} /></Svg></button>
        <button aria-label="雙頁連續" className="ml-1.5"><Svg w={24} h={22}><path d="M1 0v9h9V0M14 0v9h9V0" stroke="#777" fill="#fff" /><Fold x={1} y={12} w={9} h={10} /><Fold x={14} y={12} w={9} h={10} /></Svg></button>
        <span className="w-1.5" />
        <Grip />
        <ZoomSelect id="zoom-bottom" className="ml-[3px] h-[26px] w-[87px]" />
        <Rule className="ml-1.5 mr-2 h-[26px]" />
        <Circle label="縮小"><Minus /></Circle>
        <span className="relative mx-[7px] flex items-center">
          <input
            type="range" aria-label="縮放" min="0" max="100" defaultValue="24"
            className="h-6 w-[150px] appearance-none bg-[linear-gradient(transparent_11px,#666_11px,#666_12px,transparent_12px)] [&::-webkit-slider-thumb]:h-6 [&::-webkit-slider-thumb]:w-[11px] [&::-webkit-slider-thumb]:appearance-none [&::-webkit-slider-thumb]:rounded-sm [&::-webkit-slider-thumb]:border-2 [&::-webkit-slider-thumb]:border-[#8c8c8c] [&::-webkit-slider-thumb]:bg-white"
          />
          <span className="absolute left-1/2 h-1.5 w-px bg-[#666]" />
        </span>
        <Circle label="放大"><Plus /></Circle>
        <span className="w-[7px]" />
        <Grip />
        <button aria-label="視窗選項" className="ml-1 flex items-center gap-2">
          <Svg w={23} h={20}><rect x="1" y="1" width="21" height="18" fill="#fff" stroke="#8fb3e0" strokeWidth="2" /><path d="M0 0h23v4H0z" fill="#7fa9de" /></Svg>
          <Caret className="text-[#888]" />
        </button>
        <Svg w={8} h={9} className="mb-5 ml-2"><path d="M0 1h7M1 4h6L4 8z" stroke="#555" fill="#555" /></Svg>
      </div>
    </div>
  );
}

/* ---------- taskbar ---------- */

function TaskButton({ label, children, className }) {
  return <button aria-label={label} className={`flex h-full items-center justify-center border-b-[3px] ${className}`}>{children}</button>;
}

function Taskbar() {
  return (
    <footer className="flex h-[60px] shrink-0 items-center bg-[#ece1d0] text-black">
      <button aria-label="開始" className="flex h-full w-[73px] items-center justify-center bg-[#eae6d6]">
        <Svg w={24} h={24}><path d="M0 3.500l10-1.500v9.500H0zM11 1.800L24 0v11.500H11zM0 12.500h10V22L0 20.500zM11 12.500h13V24l-13-1.800z" fill="#000" /></Svg>
      </button>
      <label className="flex h-full w-[514px] items-center gap-4 border-2 border-[#c9c9c9] bg-white pl-4">
        <Svg w={25} h={25}><circle cx="16" cy="9" r="7.500" stroke="#000" strokeWidth="1.800" /><path d="M11 15L1 24" stroke="#000" strokeWidth="1.800" /></Svg>
        <input aria-label="搜尋" placeholder="在這裡輸入文字來搜尋" className="min-w-0 flex-1 bg-transparent text-2xl placeholder-[#3a3a3a] outline-none" />
      </label>
      <button aria-label="工作檢視" className="ml-6">
        <Svg w={26} h={24}><path d="M1 0v3h16V0M1 7h16v10H1zM1 24v-3h16v3M23.500 0v6M23.500 12v12" stroke="#000" strokeWidth="1.400" /><rect x="22" y="7" width="3" height="3" fill="#000" /></Svg>
      </button>
      <TaskButton label="檔案總管" className="ml-[34px] w-[61px] border-[#0099bc]">
        <Svg w={32} h={28}>
          <path d="M0 1h13l3 3v6H0z" fill="#d99a10" /><path d="M0 6h13l3-3h14a2 2 0 0 1 2 2v21H0z" fill="#ffd55c" />
          <path d="M5 27V17a2 2 0 0 1 2-2h18a2 2 0 0 1 2 2v10h-6v-6H11v6z" fill="#3b97dc" />
        </Svg>
      </TaskButton>
      <TaskButton label="Chrome" className="ml-3.5 w-[61px] border-[#0099bc]">
        <Svg w={33} h={33}>
          <circle cx="16.500" cy="16.500" r="16.500" fill="#fcc934" />
          <path d="M2.200 8.200A16.500 16.500 0 0 1 30.800 8.200H16.500l-7.200 12.500z" fill="#dc4a3e" />
          <path d="M2.200 8.200L9.300 20.600l12.500 2.200-5.300 10.200A16.500 16.500 0 0 1 2.200 8.200z" fill="#1e9e5a" />
          <circle cx="16.500" cy="16.500" r="7.500" fill="#fff" /><circle cx="16.500" cy="16.500" r="6" fill="#4688f1" />
        </Svg>
      </TaskButton>
      <TaskButton label="LINE" className="ml-2 w-[73px] border-[#ff7200] bg-[#fbb077]">
        <Svg w={36} h={36}>
          <rect width="36" height="36" rx="6" fill="#00b900" />
          <path d="M18 5c8 0 14 5 14 11.500 0 5-5 8-13 14.500v-4C10 27 4 23 4 16.500 4 10 10 5 18 5z" fill="#fff" />
          <text x="18" y="20" fontSize="8.500" fontWeight="800" fontFamily="Liberation Sans" fill="#00b900" textAnchor="middle">LINE</text>
        </Svg>
      </TaskButton>
      <TaskButton label="PDF-XChange Editor" className="ml-0.5 w-[73px] border-[#0099bc] bg-[#f9f5ef]"><PdfLogo size={36} /></TaskButton>
      <span className="flex-1" />
      <div className="flex shrink-0 items-center">
        <button aria-label="顯示隱藏的圖示"><Svg w={20} h={12}><path d="M1 11l9-9 9 9" stroke="#000" strokeWidth="1.500" /></Svg></button>
        <Svg w={18} h={24} className="ml-[18px]"><path d="M3 3c3-3 9-3 12 0M3 21c3 3 9 3 12 0" stroke="#000" strokeWidth="1.300" /><rect x="1" y="6" width="10" height="12" rx="2" stroke="#000" strokeWidth="1.400" /><path d="M11 11l5-4v10l-5-4z" stroke="#000" strokeWidth="1.300" /></Svg>
        <Svg w={25} h={18} className="ml-[14px]"><path d="M6 17c-6 0-7-8 0-9 1-8 12-9 14-2 6 1 6 11-1 11z" fill="#8a8a8a" stroke="#000" strokeWidth="1.500" /><path d="M6 16l13-8c5 0 6 8 1 8z" fill="#eee" /></Svg>
        <Svg w={24} h={22} className="ml-3"><path d="M6 0l6 4-6 4-6-4zM18 0l6 4-6 4-6-4zM6 8l6 4-6 4-6-4zM18 8l6 4-6 4-6-4zM12 14l5 4-5 4-5-4z" fill="#000" /></Svg>
        <Svg w={25} h={18} className="ml-3"><path d="M7 5h15v12H5M22 8h2v5h-2" stroke="#000" strokeWidth="1.500" /><rect x="9" y="7" width="11" height="8" fill="#000" /><path d="M2 0v4M6 0v4M1 4h6v3l-2 2H3L1 7zM4 9v8" stroke="#000" strokeWidth="1.400" /></Svg>
        <Svg w={20} h={20} className="ml-4"><path d="M1 19C1 9 9 1 19 1M5 19c0-8 6-14 14-14M9 19c0-5 4-9 10-10M13 19c0-3 2-5 6-6" stroke="#000" strokeWidth="1.300" /><circle cx="17" cy="17" r="1.500" fill="#000" /></Svg>
        <Svg w={23} h={20} className="ml-3.5"><path d="M1 7h3l6-6v18l-6-6H1z" stroke="#000" strokeWidth="1.500" /><path d="M13 7c1 2 1 4 0 6M16 4c3 4 3 8 0 12" stroke="#222" strokeWidth="1.200" /><path d="M19 2c4 5 4 11 0 16" stroke="#aaa" strokeWidth="1.200" /></Svg>
        <span className="ml-3 w-5 text-[20px] font-medium">中</span>
        <span className="ml-[22px] flex h-6 w-6 items-center justify-center border border-[#444] bg-white text-[17px]">ㄅ</span>
        <div className="ml-6 w-[88px] whitespace-nowrap text-center text-[17px] leading-[27px]"><div>上午 12:19</div><div>2021/3/24</div></div>
        <button aria-label="通知" className="relative ml-[26px] mr-[25px] h-[35px] w-9">
          <Svg w={24} h={24}><path d="M0 0h23v18h-6v6l-6-6H0z" fill="#000" /><path d="M4 6h15M4 9h15M4 13h10" stroke="#fff" strokeWidth="1.500" /></Svg>
          <span className="absolute bottom-0 right-0 flex h-6 w-6 items-center justify-center rounded-full border border-[#666] bg-[#c9c5be] text-[17px] font-medium leading-6">1</span>
        </button>
      </div>
    </footer>
  );
}

export default function App() {
  return (
    <div className={`flex h-screen min-w-0 flex-col overflow-hidden bg-[#f7f7f7] font-light ${SANS}`}>
      <TitleBar />
      <RibbonTabs />
      <Ribbon />
      <DocumentArea />
      <StatusBar />
      <Taskbar />
    </div>
  );
}
